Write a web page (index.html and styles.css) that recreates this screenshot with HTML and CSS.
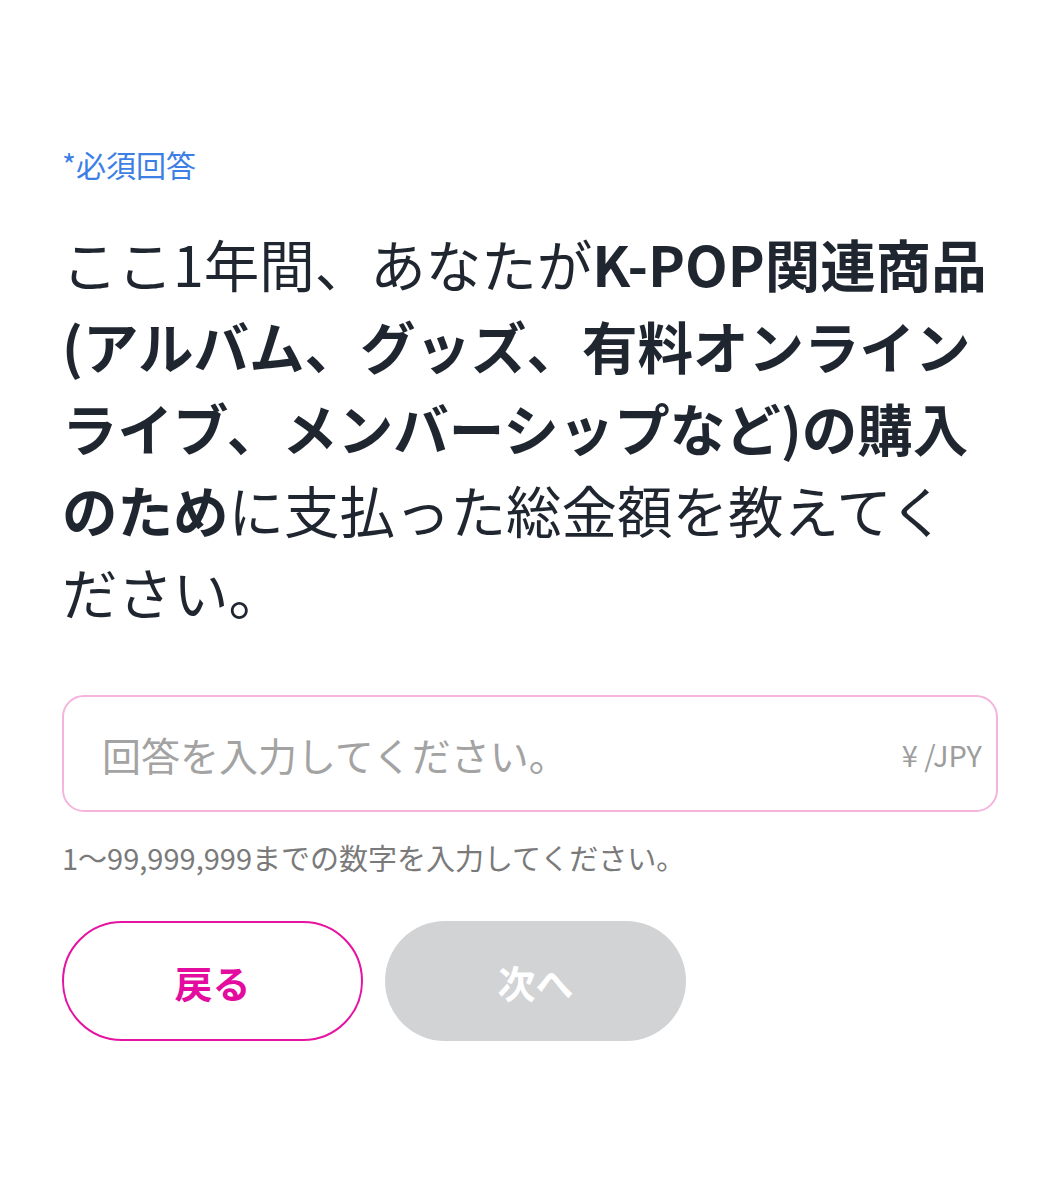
FILE: index.html
```html
<!DOCTYPE html>
<html lang="ja">
<head>
  <meta charset="UTF-8">
  <title>アンケート</title>
  <link rel="stylesheet" href="styles.css">
</head>
<body>
  <div class="survey">
    <p class="required">*必須回答</p>

    <h2 class="question">ここ1年間、あなたが<b>K-POP関連商品(アルバム、グッズ、有料オンラインライブ、メンバーシップなど)の購入のため</b>に支払った総金額を教えてください。</h2>

    <label class="answer">
      <input type="text" placeholder="回答を入力してください。">
      <span class="unit">¥ /JPY</span>
    </label>
    <p class="hint">1〜99,999,999までの数字を入力してください。</p>

    <div class="actions">
      <button class="btn back">戻る</button>
      <button class="btn next" disabled>次へ</button>
    </div>
  </div>
</body>
</html>
```

FILE: styles.css
```css
body {
  margin: 0;
  background: #fff;
  font-family: "Noto Sans CJK JP", "Noto Sans", sans-serif;
  color: #1f2630;
}
.survey {
  padding: 142px 62px 0 62px;
}
.required {
  margin: 0;
  font-size: 30px;
  line-height: 44px;
  color: #3e7fe6;
}
.question {
  margin: 36px 0 0 0;
  max-width: 935px;
  font-size: 55.5px;
  line-height: 82px;
  font-weight: 400;
}
.question b {
  font-weight: 700;
}
.answer {
  margin-top: 63px;
  display: flex;
  align-items: center;
  height: 117px;
  box-sizing: border-box;
  border: 2px solid #f4b4dc;
  border-radius: 22px;
  padding: 0 14px 0 38px;
}
.answer input {
  flex: 1;
  min-width: 0;
  border: none;
  outline: none;
  background: transparent;
  font-family: inherit;
  font-size: 39px;
  color: #333;
  padding: 0;
}
.answer input::placeholder {
  color: #a3a3a3;
}
.unit {
  font-size: 29px;
  color: #9d9d9d;
}
.hint {
  margin: 25px 0 0 0;
  font-size: 29px;
  line-height: 40px;
  color: #7a7a7a;
}
.actions {
  margin-top: 44px;
  display: flex;
  gap: 22px;
}
.btn {
  width: 301px;
  height: 120px;
  border-radius: 60px;
  font-family: inherit;
  font-size: 38px;
  font-weight: 700;
  cursor: pointer;
}
.back {
  background: #fff;
  border: 2px solid #e512a2;
  color: #e40c9f;
}
.next {
  background: #d2d3d5;
  border: none;
  color: #fff;
}
```
